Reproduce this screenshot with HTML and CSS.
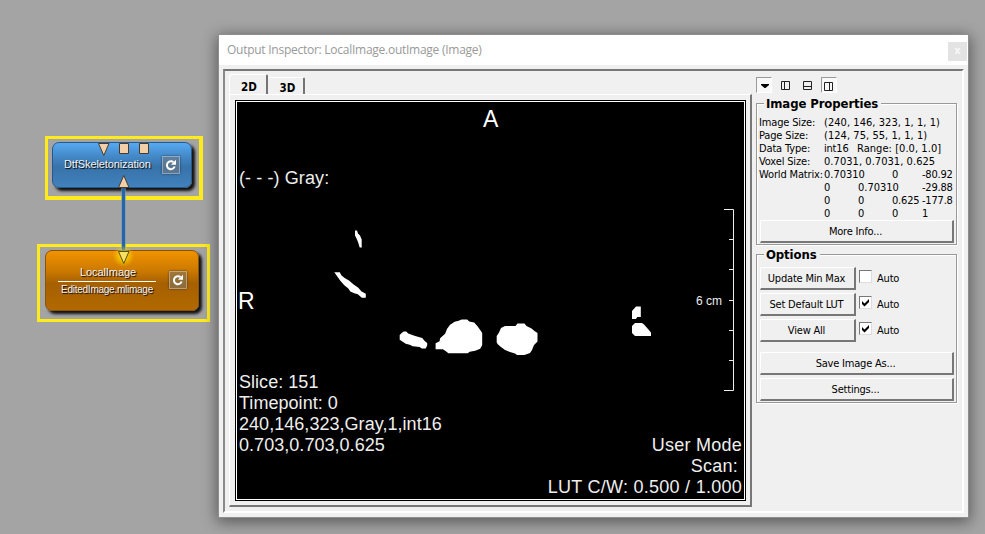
FILE: index.html
```html
<!DOCTYPE html>
<html lang="en">
<head>
<meta charset="utf-8">
<title>Output Inspector</title>
<link rel="stylesheet" href="styles.css">
</head>
<body>
<main class="desktop">
  <div class="selection selection-filter">
    <div class="node node-filter">
      <span class="node-name filter-name">DtfSkeletonization</span>
      <span class="reload"><svg width="12" height="12" viewBox="0 0 12 12"><path class="arc" d="M8.5 3.1A4 4 0 1 0 9.7 7.5"/><path class="tip" d="M11 .8V5.8H6z"/></svg></span>
    </div>
  </div>
  <div class="selection selection-image">
    <div class="node node-image">
      <span class="node-label"><span class="node-name image-name">LocalImage</span><span class="node-file">EditedImage.mlimage</span></span>
      <span class="reload"><svg width="12" height="12" viewBox="0 0 12 12"><path class="arc" d="M8.5 3.1A4 4 0 1 0 9.7 7.5"/><path class="tip" d="M11 .8V5.8H6z"/></svg></span>
    </div>
  </div>
  <svg class="wires" width="219" height="534" viewBox="0 0 219 534">
    <defs><radialGradient id="glow"><stop offset=".3" stop-color="#ffe800" stop-opacity=".7"/><stop offset="1" stop-color="#ffd800" stop-opacity="0"/></radialGradient></defs>
    <path class="wire-edge" d="M123.500 188V252"/><path class="wire" d="M123.500 188V252"/>
    <circle cx="123.500" cy="256" r="11" fill="url(#glow)"/>
    <g class="port"><path d="M98.500 143.500h10.500l-5.200 12z"/><path d="M119.500 143.500h9v10h-9zM139.500 143.500h9v10h-9z"/><path d="M118.500 187.500h10.500l-5.200-12z"/></g>
    <path class="port-active" d="M118.500 251.500h10.500l-5.200 12z"/>
  </svg>

  <section class="window">
    <header class="titlebar"><span class="title">Output Inspector: LocalImage.outImage (Image)</span><span class="close">x</span></header>
    <div class="frame">
      <div class="tabs">
        <div class="tabbar"><span class="tab tab-active">2D</span><span class="tab">3D</span></div>
        <div class="pane">
          <div class="viewer">
            <svg class="slice" width="507" height="397" viewBox="237 102 507 397">
              <g class="bone">
                <path d="M355 230.500h2l1 3 2 2 1.700 4v8h-2l-1.200-4-1.500-4-2-4z"/>
                <path d="M334.300 272.300h5.500l1.500 3 3 2.500 5 3 4 3.500 5 3.500 3 3.500 4.500 2.500v4h-4l-4-3.500-3.500-1-4-1.700-2-3-4-3.300-4-4.500z"/>
                <path d="M399.700 335l2-2 2-1.500h2.500l2 2 7 2.500 7 2 2.500 3 2.500 2v2.500l-1.500 3h-4l-2-1.500-7-.7-3-1.500-4-1-3-2-3-2z"/>
                <path d="M461.700 319.500h5.500l2 2 5 1 3.500 4 2.500 3.500 2 3v12l-2 3.700-5 2-5.500 1-2 1.500h-19.300l-2.500-2-3-2h-7.300v-6l4-2 .5-3 5-4.500 2-5 3-4 4.500-3 4-1z"/>
                <path d="M501 328l4-2h10.500l2-2.500h7l2 2.500 5 2.500 3 2.500 3 2v8.500l-3.500 3.500-2 5-2 3-5.500 2h-7.500l-2-1.500-5-1.500-5-2-4-3-3-2.500-1.300-2v-6.500l2.300-3.500z"/>
                <path d="M632 311l4-4.500h4.800v10.500h-3.500l-1.300 2h-4z"/>
                <path d="M632 326l3-3h7l2 1.500 4 4.500 3 3.500v3.500h-16l-3-3z"/>
              </g>
              <path class="ruler" d="M724 209.500H733.500V390.500H724M729 239.500h4M729 269.500h4M729 300.500h4M729 330.500h4M729 360.500h4"/>
            </svg>
            <span class="mark mark-top">A</span>
            <span class="mark mark-left">R</span>
            <span class="note note-gray">(- - -) Gray:</span>
            <span class="note scale">6 cm</span>
            <div class="note note-left">Slice: 151<br>Timepoint: 0<br>240,146,323,Gray,1,int16<br>0.703,0.703,0.625</div>
            <div class="note note-right"><span>User Mode</span><span class="scan">Scan:</span><span>LUT C/W: 0.500 / 1.000</span></div>
          </div>
        </div>
      </div>
      <aside class="side">
        <div class="tools">
          <span class="tool tool-on"><svg width="13" height="13"><path class="solid" d="M3 5h8v1L7.500 9h-1L3 6z"/></svg></span>
          <span class="tool"><svg width="13" height="13"><path d="M2.500 2.500h8v8h-8zM5.500 2.500v8"/></svg></span>
          <span class="tool"><svg width="13" height="13"><path d="M2.500 2.500h8v8h-8zM2.500 7.500h8"/></svg></span>
          <span class="tool tool-on"><svg width="13" height="13"><path d="M2.500 3.500h8v8h-8zM7.500 3.500v8"/></svg></span>
        </div>
        <fieldset class="group properties">
          <legend>Image Properties</legend>
          <div class="prop"><span class="key">Image Size:</span><span class="wide">(240, 146, 323, 1, 1, 1)</span></div>
          <div class="prop"><span class="key">Page Size:</span><span class="wide">(124, 75, 55, 1, 1, 1)</span></div>
          <div class="prop"><span class="key">Data Type:</span><span class="type">int16</span><span class="wide">Range: [0.0, 1.0]</span></div>
          <div class="prop voxel"><span class="key">Voxel Size:</span><span class="wide">0.7031, 0.7031, 0.625</span></div>
          <div class="prop"><span class="key matrix">World Matrix:</span><span class="joined">0.70310</span><span></span><span>0</span><span>-80.92</span></div>
          <div class="prop"><span class="key"></span><span>0</span><span class="joined">0.70310</span><span></span><span>-29.88</span></div>
          <div class="prop"><span class="key"></span><span>0</span><span>0</span><span>0.625</span><span>-177.8</span></div>
          <div class="prop"><span class="key"></span><span>0</span><span>0</span><span>0</span><span>1</span></div>
          <button class="button">More Info...</button>
        </fieldset>
        <fieldset class="group options">
          <legend>Options</legend>
          <div class="option"><button class="button">Update Min Max</button><span class="check"></span><span>Auto</span></div>
          <div class="option"><button class="button">Set Default LUT</button><span class="check"><svg width="9" height="9"><path d="M1 3v3l2.500 2.500L8 4V1L3.500 5.500z"/></svg></span><span>Auto</span></div>
          <div class="option"><button class="button">View All</button><span class="check"><svg width="9" height="9"><path d="M1 3v3l2.500 2.500L8 4V1L3.500 5.500z"/></svg></span><span>Auto</span></div>
          <button class="button save">Save Image As...</button>
          <button class="button">Settings...</button>
        </fieldset>
      </aside>
    </div>
  </section>
</main>
</body>
</html>
```
FILE: styles.css
```css
* { box-sizing: border-box; }
body { margin: 0; background: #a4a4a4; }
.desktop { position: relative; width: 985px; height: 534px; overflow: hidden; background: #a4a4a4; font: 11px/13px "DejaVu Sans Condensed", "DejaVu Sans", sans-serif; font-stretch: condensed; color: #000; }

/* Network nodes */
.selection { position: absolute; border: 3px solid #ffeb1c; }
.selection-filter { left: 45px; top: 136px; width: 158px; height: 64px; border-bottom-width: 4px; border-right-width: 4px; padding: 3px 4px; }
.selection-image { left: 37px; top: 244px; width: 173px; height: 78px; padding: 3px 5px; }
.node { display: flex; align-items: center; justify-content: space-between; border-radius: 7px; box-shadow: 3px 3px 3px #111; font-family: "Liberation Sans", sans-serif; font-size: 11px; color: #f4f4f4; text-shadow: 1px 1px 1px #000; white-space: nowrap; }
.node-filter { width: 140px; height: 46px; padding: 0 11px 0 11px; border: 1px solid #285986; background: linear-gradient(#56a9f2, #4489c8 30%, #3873aa 55%, #4181bd); }
.node-image { width: 154px; height: 61px; padding: 0 11px 0 12px; border: 1px solid #8c5200; background: linear-gradient(#f19300, #c97800 35%, #a66000 55%, #b26900); }
.filter-name { letter-spacing: -.1px; margin-bottom: 2px; }
.node-label { display: flex; flex-direction: column; align-items: center; width: 98px; }
.image-name { width: 98px; padding: 0 0 2px 2px; border-bottom: 1px solid #fff; text-align: center; letter-spacing: -.1px; }
.node-file { padding-top: 1px; font-size: 10px; letter-spacing: -.25px; }
.reload { display: grid; place-items: center; width: 18px; height: 18px; border: 1px solid #ffffff55; background: #77777780; box-shadow: 0 0 2px #0008; }
.node-image .reload { margin-bottom: 2px; }
.arc { fill: none; stroke: #fff; stroke-width: 2; }
.tip { fill: #fff; }
.wires { position: absolute; left: 0; top: 0; }
.wire { stroke: #2465a6; stroke-width: 3; }
.wire-edge { stroke: #7199bd; stroke-width: 5; stroke-opacity: .6; }
.port { fill: #f2cfa6; stroke: #443a30; }
.port-active { fill: #f7e165; stroke: #59500c; }

/* Inspector window */
.window { position: absolute; left: 219px; top: 35px; width: 749px; height: 482px; padding-bottom: 4px; background: #f0f0f0; box-shadow: 0 0 0 1px #8e8e8e, 0 3px 14px 2px #0007; }
.titlebar { display: flex; justify-content: space-between; align-items: center; height: 30px; padding: 2px 1px 0 8px; margin-bottom: 4px; background: #fff; }
.title { font: 12px/16px "Open Sans", sans-serif; color: #999; letter-spacing: -.26px; margin-bottom: 2px; }
.close { width: 19px; height: 19px; margin-top: 1px; background: #e3e3e3; color: #f8f8f8; font-weight: bold; text-align: center; line-height: 17px; }
.frame { display: flex; width: 741px; height: 444px; margin-left: 4px; padding: 3px 4px; border: 2px solid; border-color: #777 #fff #fff #8a8a8a; }
.tabs { width: 523px; }
.tabbar { display: flex; align-items: flex-end; height: 20px; }
.tab { width: 37px; height: 17px; border-top: 1px solid #fff; border-right: 2px solid #747474; border-radius: 3px 2px 0 0; padding: 3px 0 0 4px; font: bold 11.500px/14px "DejaVu Sans Condensed", sans-serif; text-align: center; }
.tab-active { width: 39px; height: 20px; padding: 5px 0 0 2px; border-left: 1px solid #fff; }
.pane { height: 413px; padding: 5px 4px 4px 5px; border: 1px solid #fff; border-right: 2px solid #777; border-bottom: 2px solid #777; }
.viewer { position: relative; width: 511px; height: 401px; border: 1px solid #000; background: #000; outline: 1px solid #fff; outline-offset: -2px; color: #eee; font-family: "Liberation Sans", sans-serif; white-space: nowrap; }
.slice { display: block; margin: 1px; }
.bone { fill: #fff; }
.ruler { fill: none; stroke: #eee; }
.mark, .note { position: absolute; font-size: 18px; line-height: 21px; }
.mark { font-size: 23px; line-height: 26px; color: #fff; }
.mark-top { left: 247px; top: 5px; }
.mark-left { left: 2px; top: 187px; }
.note-gray { left: 3px; top: 67px; letter-spacing: .1px; }
.note-left { left: 3px; top: 271px; letter-spacing: .04px; }
.note-right { display: flex; flex-direction: column; align-items: flex-end; right: 3px; top: 334px; letter-spacing: .26px; }
.scan { padding-right: 4px; }
.scale { left: 460px; top: 190px; font-size: 12px; }

/* Side panel */
.side { width: 201px; margin-left: 4px; }
.tools { display: flex; height: 20px; padding-top: 3px; gap: 5px 5.500px; }
.tool { display: grid; place-items: center; width: 16px; height: 16px; border: 1px solid transparent; }
.tool-on { border-color: #999 #fff #fff #999; background: #f8f8f8; }
.tool svg { fill: none; stroke: #222; }
.tool .solid { fill: #000; stroke: none; }
.group { position: relative; margin: 0; padding: 12px 2px 0 3px; min-width: 0; border: 1px solid #999; box-shadow: 1px 1px #fff, inset 1px 1px #fff; }
.properties { height: 142px; margin-top: 9px; }
.options { height: 149px; margin-top: 9px; }
.group legend { position: absolute; left: 7px; top: -8px; padding: 0 3px 0 2px; background: #f0f0f0; font: bold 13px/15px "DejaVu Sans Condensed", sans-serif; letter-spacing: -.1px; white-space: nowrap; }
.prop { display: grid; grid-template-columns: 65px 34px 34px 30px 32px; height: 13px; margin-left: -1px; white-space: nowrap; letter-spacing: -.2px; }
.key { letter-spacing: -.15px; }
.joined { letter-spacing: 0; }
.wide { letter-spacing: .05px; }
.type + .wide { margin-left: -1px; }
.button { display: block; width: 194px; height: 23px; padding: 0 2px 0 0; border: solid; border-width: 1px 2px 2px 1px; border-color: #fff #777 #777 #fff; background: #f0f0f0; color: #000; font: inherit; letter-spacing: -.2px; text-align: center; }
.option { display: flex; height: 26px; }
.option > .button { width: 96px; margin-right: 3px; }
.check { width: 13px; height: 13px; margin: 3px 5px 0 0; border: 1px solid; border-color: #777 #ddd #ddd #777; background: #fff; }
.check svg { display: block; margin: 1px; }
.option > span:last-child { margin-top: 5px; letter-spacing: -.2px; }
.options .save { margin: 7px 0 3px; }
```
